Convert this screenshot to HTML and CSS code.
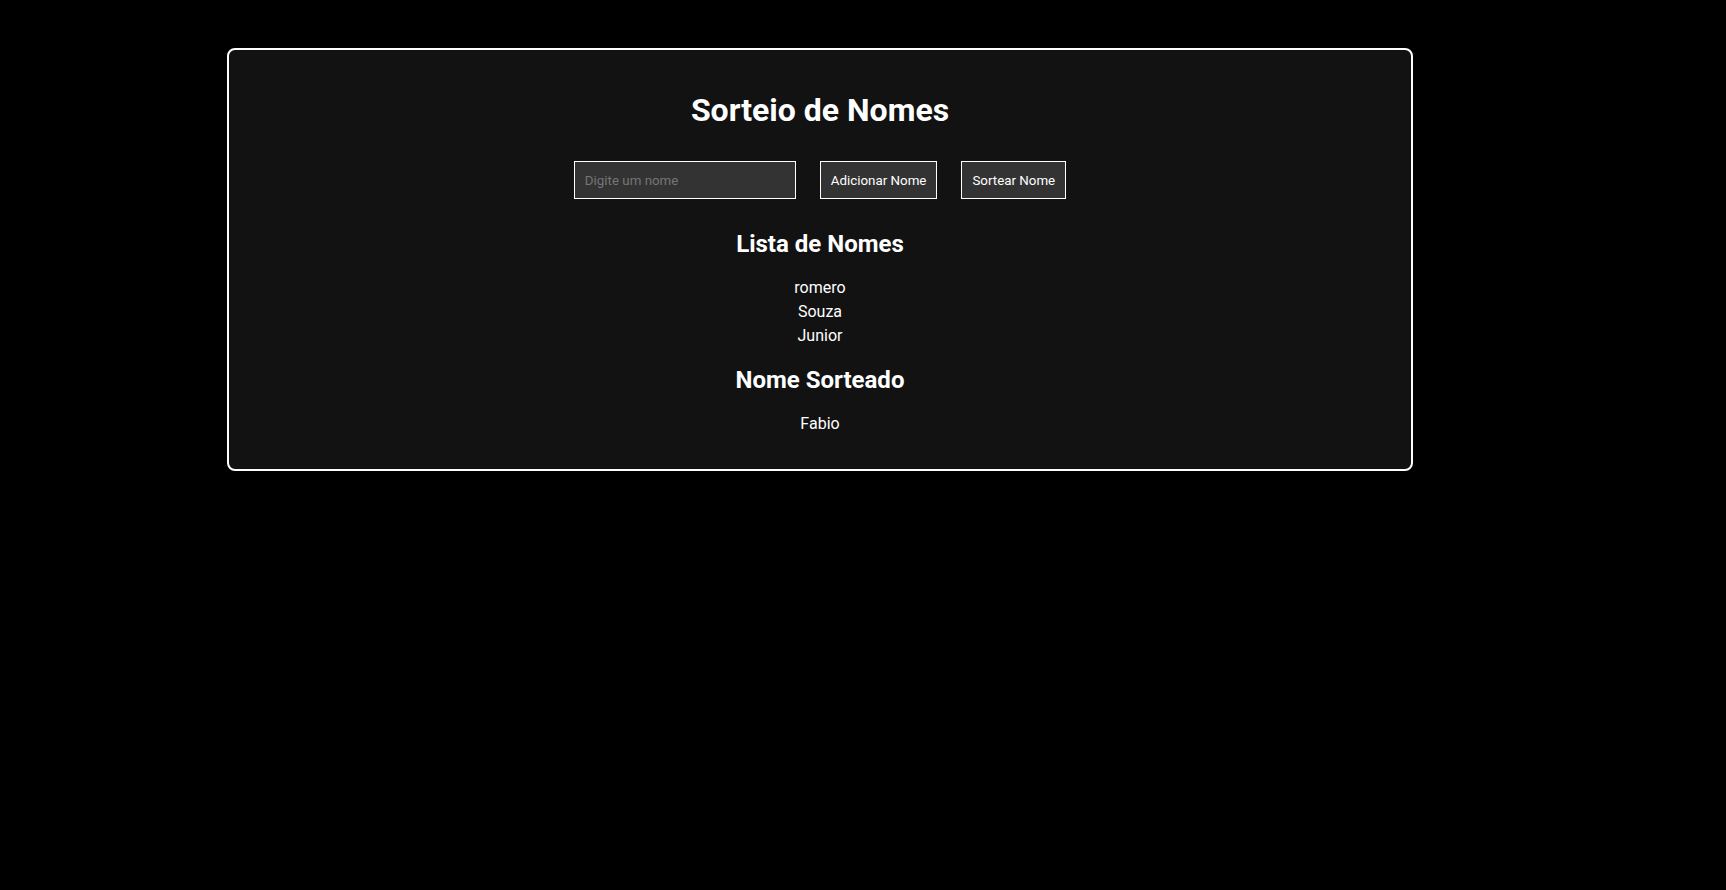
FILE: index.html
```html
<!DOCTYPE html>
<html lang="pt-BR">
<head>
<meta charset="utf-8">
<title>Sorteio de Nomes</title>
<link rel="stylesheet" href="styles.css">
</head>
<body>
<div class="card">
  <h1 class="title">Sorteio de Nomes</h1>
  <div class="controls">
    <input class="name-input" type="text" placeholder="Digite um nome">
    <button class="btn">Adicionar Nome</button>
    <button class="btn">Sortear Nome</button>
  </div>
  <h2 class="subtitle list-title">Lista de Nomes</h2>
  <ul class="names">
    <li>romero</li>
    <li>Souza</li>
    <li>Junior</li>
  </ul>
  <h2 class="subtitle drawn-title">Nome Sorteado</h2>
  <p class="result">Fabio</p>
</div>
</body>
</html>
```

FILE: styles.css
```css
html, body {
  margin: 0;
  padding: 0;
  background: #000;
}

body {
  font-family: Roboto, "Liberation Sans", Arial, sans-serif;
  color: #fff;
  height: 890px;
}

.card {
  box-sizing: border-box;
  width: 1186px;
  margin: 48px 0 0 227px;
  background: #121212;
  border: 2px solid #fff;
  border-radius: 8px;
  padding: 41px 20px 33px;
  display: flex;
  flex-direction: column;
  align-items: center;
}

.title {
  margin: 0;
  font-size: 32px;
  line-height: 38px;
  font-weight: 700;
}

.controls {
  margin-top: 32px;
  display: flex;
  gap: 24px;
}

.name-input {
  box-sizing: border-box;
  width: 222px;
  height: 38px;
  background: #333;
  border: 1px solid #fff;
  border-radius: 0;
  color: #fff;
  padding: 0 10px;
  font-family: Roboto, "Liberation Sans", Arial, sans-serif;
  font-size: 13.33px;
  outline: none;
}

.name-input::placeholder {
  color: #757575;
}

.btn {
  box-sizing: border-box;
  height: 38px;
  padding: 0 10px;
  background: #333;
  border: 1px solid #fff;
  border-radius: 0;
  color: #fff;
  font-family: Roboto, "Liberation Sans", Arial, sans-serif;
  font-size: 13.33px;
  font-weight: 400;
}

.subtitle {
  margin: 0;
  font-size: 24px;
  line-height: 28px;
  font-weight: 700;
}

.list-title {
  margin-top: 31px;
}

.drawn-title {
  margin-top: 18px;
}

.names {
  list-style: none;
  margin: 18px 0 0;
  padding: 0;
  text-align: center;
  font-size: 16px;
  line-height: 24px;
}

.result {
  margin: 18px 0 0;
  font-size: 16px;
  line-height: 24px;
}
```
